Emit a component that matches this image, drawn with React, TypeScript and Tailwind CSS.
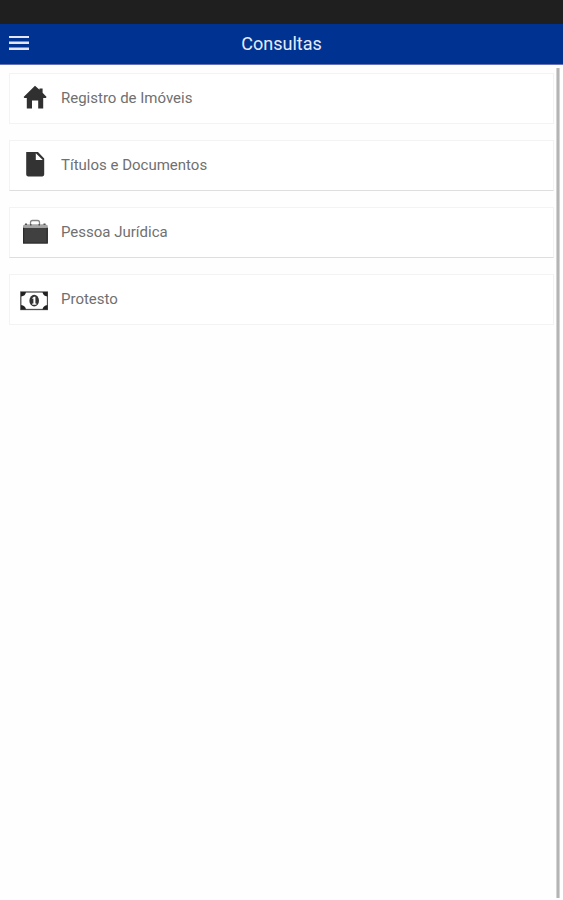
import type { ReactNode } from 'react';

function HomeIcon() {
  return (
    <svg className="size-7 shrink-0" viewBox="0 0 28 28" fill="#303030" aria-hidden="true">
      <path d="M15 0.8 L19.5 4.8 V3.6 H22.6 V7.8 L26.6 12 L25.8 13 H23.2 V23.5 H18.2 V15.5 H12 V23.5 H6.8 V13 H4.4 L3.6 12 Z" />
    </svg>
  );
}

function DocumentIcon() {
  return (
    <svg className="size-7 shrink-0" viewBox="0 0 28 28" fill="#333333" aria-hidden="true">
      <path fillRule="evenodd" d="M7.2 -0.5 H17.5 L24.2 6.5 V22.6 Q24.2 24.4 22.4 24.4 H8 Q6.2 24.4 6.2 22.6 V0.5 Q6.2 -0.5 7.2 -0.5 Z M15.8 1.2 V8 H22.8 Z" />
    </svg>
  );
}

function BriefcaseIcon() {
  return (
    <svg className="size-7 shrink-0" viewBox="0 0 28 28" aria-hidden="true">
      <path d="M10.5 5.5 V3.5 Q10.5 1.5 12.5 1.5 H17.5 Q19.5 1.5 19.5 3.5 V5.5" fill="none" stroke="#858585" strokeWidth="1.3" />
      <path d="M3 8.8 V6.5 L5 5.2 H25.5 L27.8 6.5 V8.8 Z" fill="#a5a5a5" />
      <path d="M5 4.5 H7 V6 H5 Z M23.5 4.5 H25.5 V6 H23.5 Z M10 5 H11.5 V6.5 H10 Z M18.5 5 H20 V6.5 H18.5 Z" fill="#555555" />
      <path d="M3 8.8 H27.8 V24.5 H3 Z" fill="#404040" />
      <path d="M3 8.8 H4.2 V24.5 H3 Z M26.6 8.8 H27.8 V24.5 H26.6 Z M3 23.5 H27.8 V24.5 H3 Z" fill="#2b2b2b" />
    </svg>
  );
}

function BanknoteIcon() {
  return (
    <svg className="size-7 shrink-0" viewBox="0 0 28 28" aria-hidden="true">
      <rect x="0.8" y="6" width="26.7" height="17.5" fill="#ffffff" stroke="#505050" strokeWidth="1.3" />
      <path d="M1 6 H6 Q5.5 10 1 10.5 Z M27.5 6 H22.5 Q23 10 27.5 10.5 Z M1 23.5 H6 Q5.5 19.5 1 19 Z M27.5 23.5 H22.5 Q23 19.5 27.5 19 Z" fill="#222222" />
      <ellipse cx="14.2" cy="14.7" rx="4.8" ry="5.9" fill="#333333" />
      <path d="M12.4 12 L14 10.8 H15.4 V17.5 H16.4 V18.7 H12.2 V17.5 H13.4 V12.5 L12.4 13.1 Z" fill="#ffffff" />
    </svg>
  );
}

type Item = { label: string; icon: ReactNode; edge: string };

const items: Item[] = [
  { label: 'Registro de Imóveis', icon: <HomeIcon />, edge: 'border-b-[#f3f3f3]' },
  { label: 'Títulos e Documentos', icon: <DocumentIcon />, edge: 'border-b-[#dedede]' },
  { label: 'Pessoa Jurídica', icon: <BriefcaseIcon />, edge: 'border-b-[#dedede]' },
  { label: 'Protesto', icon: <BanknoteIcon />, edge: 'border-b-[#f3f3f3]' },
];

export default function App() {
  return (
    <div className="flex min-h-screen flex-col bg-[#fefefe] font-['Roboto',sans-serif]">
      <div className="h-6 bg-[#1f1f1f]" />
      <header className="grid h-[41px] grid-cols-[40px_1fr_40px] items-center border-b border-[#6672b5] bg-[#003391]">
        <button type="button" aria-label="Menu" className="flex h-10 items-center pl-[9px]">
          <svg className="h-4 w-5" viewBox="0 0 20 16" fill="#e4e4fb" aria-hidden="true">
            <path d="M0 -0.5 H20 V2 H0 Z M0 5.5 H20 V8 H0 Z M0 11.5 H20 V14 H0 Z" />
          </svg>
        </button>
        <h1 className="text-center text-lg text-[#e4eafa]">Consultas</h1>
      </header>
      <main className="flex flex-1">
        <ul className="flex flex-1 flex-col gap-4 pt-2 pr-0.5 pl-[9px]">
          {items.map((item) => (
            <li key={item.label}>
              <button
                type="button"
                className={`flex h-[51px] w-full items-center gap-[13px] border border-[#f3f3f3] bg-white pl-2.5 text-left text-[15px] text-[#707070] ${item.edge}`}
              >
                {item.icon}
                <span>{item.label}</span>
              </button>
            </li>
          ))}
        </ul>
        <div className="mt-[3px] mr-[3px] mb-0.5 w-1 border-x border-[#d4d4d4] bg-[#b4b4b4]" />
      </main>
    </div>
  );
}
